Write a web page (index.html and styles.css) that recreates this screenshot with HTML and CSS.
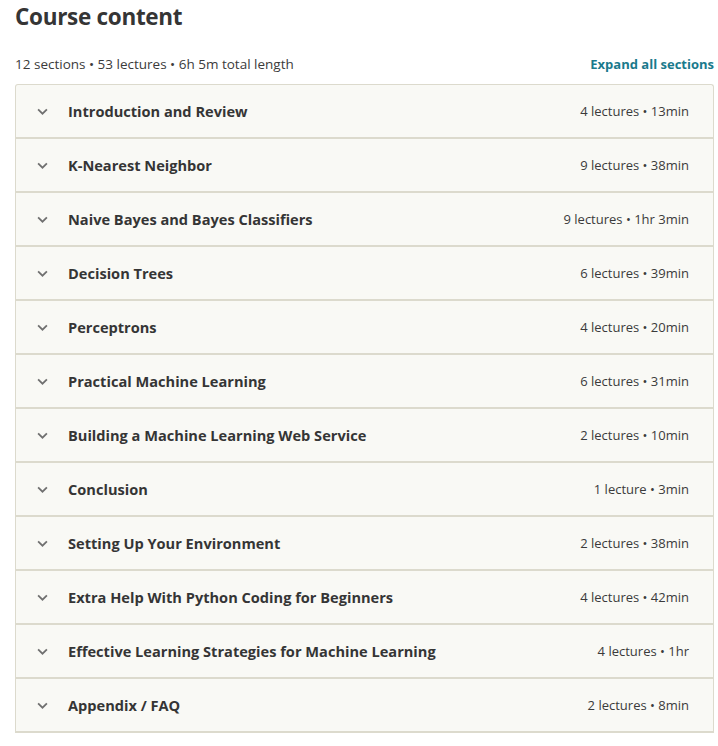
FILE: index.html
```html
<!DOCTYPE html>
<html>
<head>
<meta charset="utf-8">
<link rel="stylesheet" href="styles.css">
</head>
<body>
<div class="page">
  <h2 class="title">Course content</h2>
  <div class="summary">
    <span>12 sections • 53 lectures • 6h 5m total length</span>
    <a class="expand">Expand all sections</a>
  </div>
  <div class="sections">
    <div class="row"><svg class="chev" viewBox="0 0 10 6"><path d="M1 1l4 4 4-4" /></svg><span class="name">Introduction and Review</span><span class="meta">4 lectures • 13min</span></div>
    <div class="row"><svg class="chev" viewBox="0 0 10 6"><path d="M1 1l4 4 4-4" /></svg><span class="name">K-Nearest Neighbor</span><span class="meta">9 lectures • 38min</span></div>
    <div class="row"><svg class="chev" viewBox="0 0 10 6"><path d="M1 1l4 4 4-4" /></svg><span class="name">Naive Bayes and Bayes Classifiers</span><span class="meta">9 lectures • 1hr 3min</span></div>
    <div class="row"><svg class="chev" viewBox="0 0 10 6"><path d="M1 1l4 4 4-4" /></svg><span class="name">Decision Trees</span><span class="meta">6 lectures • 39min</span></div>
    <div class="row"><svg class="chev" viewBox="0 0 10 6"><path d="M1 1l4 4 4-4" /></svg><span class="name">Perceptrons</span><span class="meta">4 lectures • 20min</span></div>
    <div class="row"><svg class="chev" viewBox="0 0 10 6"><path d="M1 1l4 4 4-4" /></svg><span class="name">Practical Machine Learning</span><span class="meta">6 lectures • 31min</span></div>
    <div class="row"><svg class="chev" viewBox="0 0 10 6"><path d="M1 1l4 4 4-4" /></svg><span class="name">Building a Machine Learning Web Service</span><span class="meta">2 lectures • 10min</span></div>
    <div class="row"><svg class="chev" viewBox="0 0 10 6"><path d="M1 1l4 4 4-4" /></svg><span class="name">Conclusion</span><span class="meta">1 lecture • 3min</span></div>
    <div class="row"><svg class="chev" viewBox="0 0 10 6"><path d="M1 1l4 4 4-4" /></svg><span class="name">Setting Up Your Environment</span><span class="meta">2 lectures • 38min</span></div>
    <div class="row"><svg class="chev" viewBox="0 0 10 6"><path d="M1 1l4 4 4-4" /></svg><span class="name">Extra Help With Python Coding for Beginners</span><span class="meta">4 lectures • 42min</span></div>
    <div class="row"><svg class="chev" viewBox="0 0 10 6"><path d="M1 1l4 4 4-4" /></svg><span class="name">Effective Learning Strategies for Machine Learning</span><span class="meta">4 lectures • 1hr</span></div>
    <div class="row"><svg class="chev" viewBox="0 0 10 6"><path d="M1 1l4 4 4-4" /></svg><span class="name">Appendix / FAQ</span><span class="meta">2 lectures • 8min</span></div>
  </div>
</div>
</body>
</html>
```
FILE: styles.css
```css
html, body {
  margin: 0;
  padding: 0;
  background: #fff;
}
body {
  font-family: "Open Sans", "Noto Sans", sans-serif;
  color: #3b3b3b;
}
.page {
  padding: 0 4px 0 15px;
}
.title {
  margin: 0;
  padding-top: 1px;
  font-size: 22.5px;
  font-weight: 700;
  line-height: 31px;
  color: #353535;
  letter-spacing: -0.3px;
}
.summary {
  display: flex;
  justify-content: space-between;
  align-items: center;
  margin-top: 22px;
  height: 20px;
  font-size: 13.5px;
  color: #3b3b3b;
  margin-bottom: 10px;
}
.expand {
  font-weight: 700;
  color: #1a7a8c;
  font-size: 13px;
}
.sections {
  border: 1px solid #dcdacd;
  border-bottom: none;
  border-radius: 3px 3px 0 0;
  background: #f9f9f5;
}
.row {
  display: flex;
  align-items: center;
  height: 52px;
  border-bottom: 2px solid #dcdacd;
  box-sizing: content-box;
  padding: 0 24px 0 21px;
}
.chev {
  width: 11px;
  height: 7px;
  fill: none;
  stroke: #707070;
  stroke-width: 1.6;
  margin-right: 20px;
  flex: none;
}
.name {
  flex: 1;
  font-size: 14.6px;
  font-weight: 700;
  color: #353535;
}
.meta {
  font-size: 13px;
  color: #3b3b3b;
}
```
